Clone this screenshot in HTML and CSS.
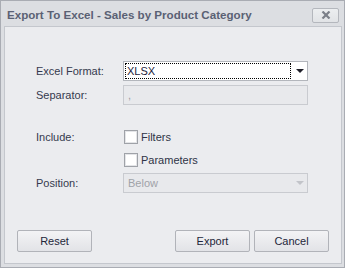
FILE: index.html
```html
<!DOCTYPE html>
<html>
<head>
<meta charset="utf-8">
<link rel="stylesheet" href="styles.css">
</head>
<body>
<div class="window">
  <div class="titlebar">
    <span class="title">Export To Excel - Sales by Product Category</span>
    <span class="close">
      <svg width="10" height="8" viewBox="0 0 10 8"><path d="M1.5 0.5 L8.5 7.5 M8.5 0.5 L1.5 7.5" stroke="#7c8089" stroke-width="2.2"/></svg>
    </span>
  </div>
  <div class="panel">
    <div class="form">
      <div class="row r1">
        <div class="label">Excel Format:</div>
        <div class="combo active">
          <div class="combo-text"><span>XLSX</span></div>
          <div class="combo-btn"><span class="arrow"></span></div>
        </div>
      </div>
      <div class="row r2">
        <div class="label">Separator:</div>
        <div class="textbox disabled"><span>,</span></div>
      </div>
      <div class="row r3">
        <div class="label">Include:</div>
        <div class="check"><span class="box"></span><span>Filters</span></div>
      </div>
      <div class="row r4">
        <div class="label"></div>
        <div class="check"><span class="box"></span><span>Parameters</span></div>
      </div>
      <div class="row r5">
        <div class="label">Position:</div>
        <div class="combo disabled">
          <div class="combo-text"><span>Below</span></div>
          <div class="combo-btn"><span class="arrow"></span></div>
        </div>
      </div>
    </div>
    <div class="buttons">
      <button class="btn">Reset</button>
      <div class="spacer"></div>
      <button class="btn">Export</button>
      <button class="btn">Cancel</button>
    </div>
  </div>
</div>
</body>
</html>
```

FILE: styles.css
```css
* { box-sizing: border-box; }
html, body { margin: 0; padding: 0; }
body {
  width: 345px;
  height: 268px;
  font-family: "Liberation Sans", "DejaVu Sans", sans-serif;
  font-size: 11px;
  color: #353a4e;
}
.window {
  width: 345px;
  height: 268px;
  background: #dcdee2;
  border: 1px solid #a9acb3;
  display: flex;
  flex-direction: column;
  padding: 0 2px 3px 3px;
}
.titlebar {
  height: 25px;
  display: flex;
  align-items: center;
  padding-left: 3px;
  padding-right: 3px;
}
.title {
  font-weight: bold;
  font-size: 11.6px;
  color: #5a6174;
  flex: 1;
  padding-top: 1px;
}
.close {
  width: 27px;
  height: 15px;
  border: 1px solid #b4b7bd;
  border-radius: 2px;
  background: linear-gradient(#eceef0, #e1e3e6);
  display: flex;
  align-items: center;
  justify-content: center;
  margin-top: 3px;
}
.panel {
  flex: 1;
  background: #ebecef;
  border: 1px solid #c4c7cd;
  display: flex;
  flex-direction: column;
  padding: 34px 12px 11px 12px;
}
.form {
  display: flex;
  flex-direction: column;
  padding-left: 19px;
}
.row {
  display: flex;
  align-items: center;
  height: 20px;
}
.r2 { margin-top: 4px; }
.r3 { margin-top: 22px; }
.r4 { margin-top: 3px; }
.r5 { margin-top: 3px; }
.label {
  width: 87px;
  flex: none;
  color: #353a4e;
}
.combo, .textbox {
  width: 185px;
  height: 20px;
  border: 1px solid #b9bcc2;
  background: #ffffff;
  display: flex;
}
.combo.active { border-color: #b3b6bc; }
.combo-text {
  flex: 1;
  display: flex;
  align-items: center;
  padding-left: 2px;
  margin: 1px 0 1px 1px;
  color: #1c1c3c;
}
.combo.active .combo-text {
  border: 1px dotted #000;
  padding-left: 1px;
}
.combo-btn {
  width: 16px;
  display: flex;
  align-items: center;
  justify-content: center;
}
.arrow {
  width: 0;
  height: 0;
  border-left: 4px solid transparent;
  border-right: 4px solid transparent;
  border-top: 4px solid #1e1e28;
  margin-left: 2px;
}
.disabled {
  background: #e8e9ec;
  border-color: #c9cbd0;
  color: #9a9ca3;
}
.disabled .combo-text { color: #a0a2a8; padding-left: 3px; }
.disabled .arrow { border-top-color: #c2c4c9; }
.textbox span {
  padding-left: 4px;
  display: flex;
  align-items: center;
  color: #9a9ca3;
}
.check {
  display: flex;
  align-items: center;
  gap: 3px;
  color: #2f3446;
}
.box {
  width: 14px;
  height: 14px;
  border: 1px solid #9fa2a8;
  background: #fff;
  box-shadow: inset 0 0 0 1px #e4e5e8;
  margin-left: 1px;
}
.buttons {
  margin-top: auto;
  display: flex;
  align-items: center;
}
.spacer { flex: 1; }
.btn {
  width: 75px;
  height: 22px;
  font-family: "Liberation Sans", "DejaVu Sans", sans-serif;
  font-size: 11px;
  color: #23263a;
  border: 1px solid #b1b3b9;
  border-radius: 2px;
  background: linear-gradient(#f3f3f5, #e2e3e7);
  padding: 0;
}
.btn + .btn { margin-left: 4px; }
```
